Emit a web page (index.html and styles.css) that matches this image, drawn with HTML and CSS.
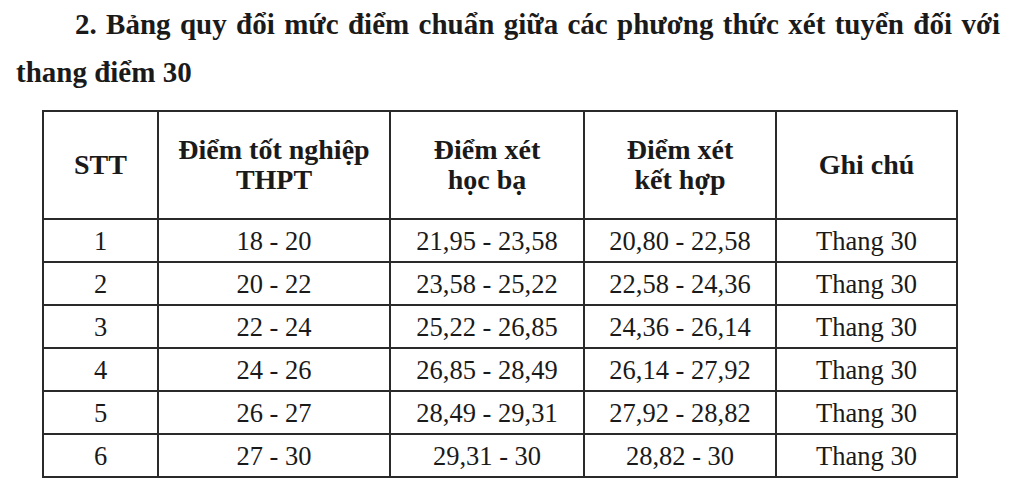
FILE: index.html
```html
<!DOCTYPE html>
<html lang="vi">
<head>
<meta charset="utf-8">
<title>Bảng quy đổi</title>
<link rel="stylesheet" href="styles.css">
</head>
<body>
<div class="page">
  <p class="heading">2. Bảng quy đổi mức điểm chuẩn giữa các phương thức xét tuyển đối với thang điểm 30</p>
  <table class="grid">
    <colgroup>
      <col class="c1"><col class="c2"><col class="c3"><col class="c4"><col class="c5">
    </colgroup>
    <thead>
      <tr>
        <th>STT</th>
        <th>Điểm tốt nghiệp<br>THPT</th>
        <th>Điểm xét<br>học bạ</th>
        <th>Điểm xét<br>kết hợp</th>
        <th>Ghi chú</th>
      </tr>
    </thead>
    <tbody>
      <tr><td>1</td><td>18 - 20</td><td>21,95 - 23,58</td><td>20,80 - 22,58</td><td>Thang 30</td></tr>
      <tr><td>2</td><td>20 - 22</td><td>23,58 - 25,22</td><td>22,58 - 24,36</td><td>Thang 30</td></tr>
      <tr><td>3</td><td>22 - 24</td><td>25,22 - 26,85</td><td>24,36 - 26,14</td><td>Thang 30</td></tr>
      <tr><td>4</td><td>24 - 26</td><td>26,85 - 28,49</td><td>26,14 - 27,92</td><td>Thang 30</td></tr>
      <tr><td>5</td><td>26 - 27</td><td>28,49 - 29,31</td><td>27,92 - 28,82</td><td>Thang 30</td></tr>
      <tr><td>6</td><td>27 - 30</td><td>29,31 - 30</td><td>28,82 - 30</td><td>Thang 30</td></tr>
    </tbody>
  </table>
</div>
</body>
</html>
```
FILE: styles.css
```css
html, body {
  margin: 0;
  padding: 0;
  background: #ffffff;
}
.page {
  font-family: "Liberation Serif", "Times New Roman", serif;
  color: #1a1a1a;
  padding: 0 20px 0 16px;
}
.heading {
  margin: 0;
  font-size: 29px;
  font-weight: bold;
  line-height: 48px;
  text-indent: 59px;
  text-align: justify;
}
.grid {
  margin: 14px 0 0 26px;
  border-collapse: collapse;
  width: 914px;
  table-layout: fixed;
  font-size: 26.5px;
}
.c1 { width: 115px; }
.c2 { width: 232px; }
.c3 { width: 194px; }
.c4 { width: 192px; }
.c5 { width: 181px; }
.grid th, .grid td {
  border: 2px solid #2a2a2a;
  text-align: center;
  vertical-align: middle;
  padding: 0;
}
.grid th {
  height: 106px;
  font-weight: bold;
  font-size: 28px;
  line-height: 30px;
}
.grid td {
  height: 41px;
  line-height: 30px;
}
```
